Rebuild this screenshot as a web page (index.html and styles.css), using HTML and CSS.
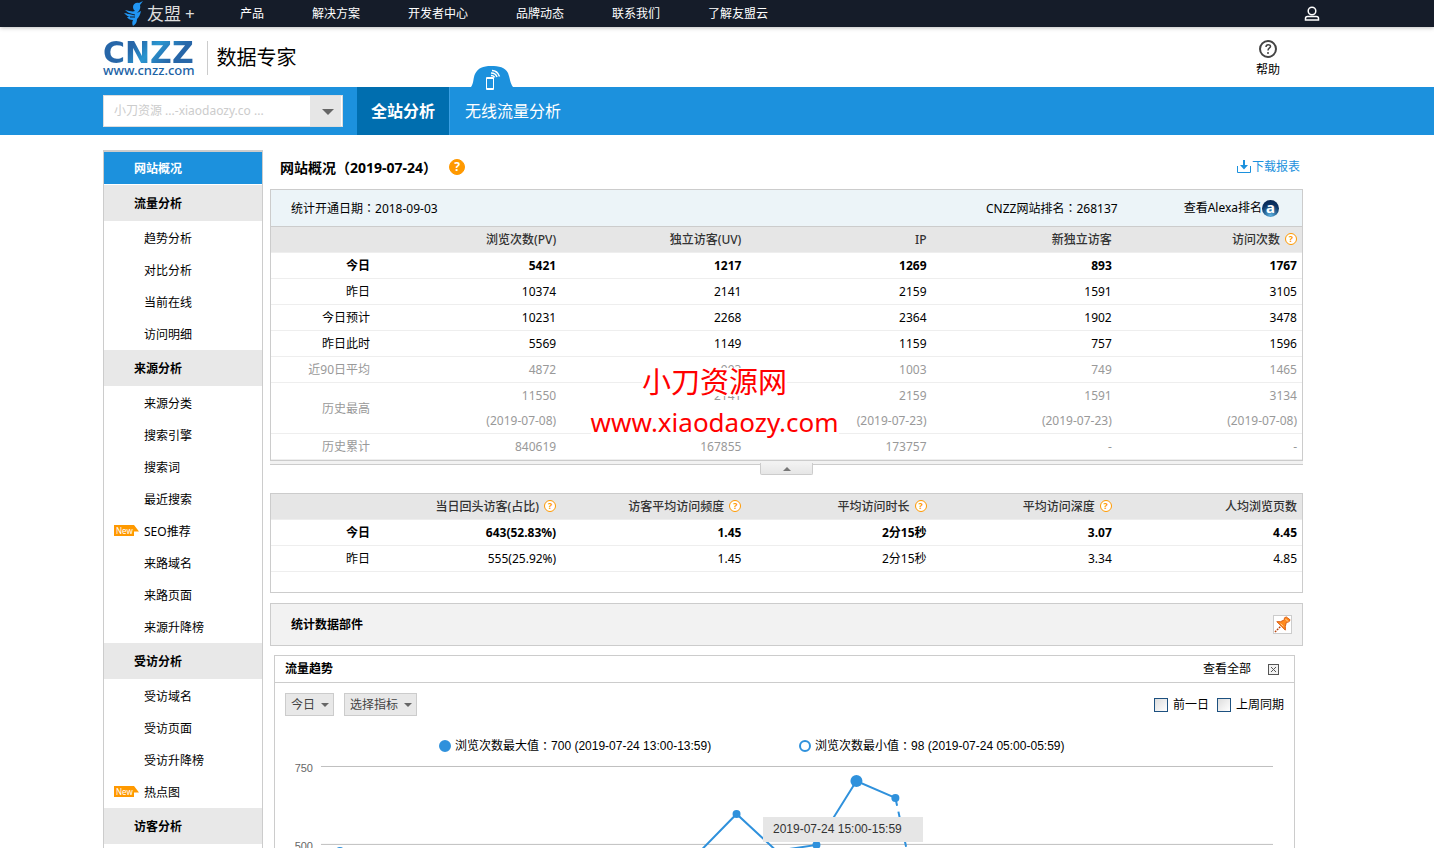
FILE: index.html
```html
<!DOCTYPE html>
<html lang="zh-CN">
<head>
    <meta charset="UTF-8">
    <meta name="viewport" content="width=device-width, initial-scale=1.0">
    <title>网站概况</title>
    <link rel="stylesheet" href="styles.css">
</head>
<body>
    <div class="topbar">
        <div class="wrap topbar-inner">
            <a class="umeng" href="#">
                <svg width="20" height="26" viewBox="0 0 20 26">
                    <path fill="#2196f3" d="M9 6c0-3 3-5 6-4l4-2-3 4c1 4-1 6-3 8l4-2c-1 4-2 6-4 8 0 3-1 5-4 7-1-2-1-4 0-6-3 0-5-1-6-3h4C4 16 2 14 0 12l7 1C5 12 3 11 1 9c4 1 8 2 10 1-1-1-2-2-2-4z"/>
                    <path fill="none" stroke="#151c29" d="M3 12l8 2M6 16h5"/>
                </svg>
                <span>友盟</span><span class="plus">+</span>
            </a>
            <nav class="topnav">
                <a href="#">产品</a>
                <a href="#">解决方案</a>
                <a href="#">开发者中心</a>
                <a href="#">品牌动态</a>
                <a href="#">联系我们</a>
                <a href="#">了解友盟云</a>
            </nav>
            <a class="user" href="#" aria-label="用户">
                <svg width="16" height="16" viewBox="0 0 16 16" fill="none" stroke="#fff" stroke-width="1.500">
                    <circle cx="8" cy="5" r="3.800"/>
                    <path d="M1.500 14v-1.500c0-1.500 1-2 2-2h9c1 0 2 .5 2 2V14z"/>
                </svg>
            </a>
        </div>
    </div>

    <header class="wrap header">
        <a class="cnzz" href="#">
            <span class="cnzz-name">CNZZ</span>
            <span class="cnzz-url">www.cnzz.com</span>
        </a>
        <span class="product">数据专家</span>
        <a class="help" href="#">
            <svg width="18" height="18" viewBox="0 0 18 18" fill="none" stroke="#444">
                <circle cx="9" cy="9" r="8" stroke-width="2"/>
                <path d="M7 7c0-3 4.500-3 4.500-.5C11.500 8 9 8 9 10.500M9 12v2" stroke-width="1.500"/>
            </svg>
            <span>帮助</span>
        </a>
    </header>

    <div class="bluebar">
        <div class="wrap bluebar-inner">
            <div class="dropdown site-select">
                <select aria-label="站点">
                    <option>小刀资源 ...-xiaodaozy.co ...</option>
                </select>
            </div>
            <a class="tab active" href="#">全站分析</a>
            <a class="tab" href="#">无线流量分析
                <svg class="bump" width="42" height="28" viewBox="0 0 42 28">
                    <path fill="#1c91dd" d="M0 21C3 17 2 12 4 8 7 2 12 0 20 0s14 1 17 7c2 5 2 10 5 14v7H0z"/>
                    <path fill="none" stroke="#fff" d="M15.500 11.500h7v12h-7zM15 22.500h8M15 12.500h8"/>
                    <path fill="none" stroke="#fff" stroke-width="1.500" d="M20 9.500c2 0 3 .5 3.500 2M20 7c3 0 5 1 6 4M21 4.500c4 0 6 2 7.500 6"/>
                </svg>
            </a>
        </div>
    </div>

    <div class="wrap content">
        <aside class="sidebar">
            <a class="current" href="#">网站概况</a>
            <h3>流量分析</h3>
            <ul>
                <li><a href="#">趋势分析</a></li>
                <li><a href="#">对比分析</a></li>
                <li><a href="#">当前在线</a></li>
                <li><a href="#">访问明细</a></li>
            </ul>
            <h3>来源分析</h3>
            <ul>
                <li><a href="#">来源分类</a></li>
                <li><a href="#">搜索引擎</a></li>
                <li><a href="#">搜索词</a></li>
                <li><a href="#">最近搜索</a></li>
                <li><span class="new">New</span><a href="#">SEO推荐</a></li>
                <li><a href="#">来路域名</a></li>
                <li><a href="#">来路页面</a></li>
                <li><a href="#">来源升降榜</a></li>
            </ul>
            <h3>受访分析</h3>
            <ul>
                <li><a href="#">受访域名</a></li>
                <li><a href="#">受访页面</a></li>
                <li><a href="#">受访升降榜</a></li>
                <li><span class="new">New</span><a href="#">热点图</a></li>
            </ul>
            <h3>访客分析</h3>
        </aside>

        <main>
            <div class="title-row">
                <h1>网站概况<span class="punct" lang="zh-TW">（</span>2019-07-24<span class="punct" lang="zh-TW">）</span></h1>
                <span class="tip tip-solid">?</span>
                <a class="download" href="#">
                    <svg width="15" height="14" viewBox="0 0 15 14">
                        <path fill="none" stroke="#1c91dd" d="M.5 6v6.500h13V6"/>
                        <path fill="#1c91dd" d="M6 0h2v5h3L7 9.500 3 5h3z"/>
                    </svg>下载报表
                </a>
            </div>

            <section class="panel overview">
                <div class="info">
                    <span>统计开通日期<span class="punct" lang="zh-TW">：</span>2018-09-03</span>
                    <span class="rank">CNZZ网站排名<span class="punct" lang="zh-TW">：</span>268137</span>
                    <a class="alexa" href="#">查看Alexa排名<span class="alexa-icon">a</span></a>
                </div>
                <table class="data">
                    <thead>
                        <tr><th></th><th>浏览次数(PV)</th><th>独立访客(UV)</th><th>IP</th><th>新独立访客</th><th>访问次数 <span class="tip">?</span></th></tr>
                    </thead>
                    <tbody>
                        <tr class="today"><td>今日</td><td>5421</td><td>1217</td><td>1269</td><td>893</td><td>1767</td></tr>
                        <tr><td>昨日</td><td>10374</td><td>2141</td><td>2159</td><td>1591</td><td>3105</td></tr>
                        <tr><td>今日预计</td><td>10231</td><td>2268</td><td>2364</td><td>1902</td><td>3478</td></tr>
                        <tr><td>昨日此时</td><td>5569</td><td>1149</td><td>1159</td><td>757</td><td>1596</td></tr>
                        <tr class="old"><td>近90日平均</td><td>4872</td><td>993</td><td>1003</td><td>749</td><td>1465</td></tr>
                        <tr class="old"><td>历史最高</td><td>11550<br>(2019-07-08)</td><td>2141<br>&nbsp;</td><td>2159<br>(2019-07-23)</td><td>1591<br>(2019-07-23)</td><td>3134<br>(2019-07-08)</td></tr>
                        <tr class="old"><td>历史累计</td><td>840619</td><td>167855</td><td>173757</td><td>-</td><td>-</td></tr>
                    </tbody>
                </table>
                <div class="watermark">
                    <span class="watermark-name">小刀资源网</span>
                    <span class="watermark-url">www.xiaodaozy.com</span>
                </div>
            </section>
            <div class="fold"><button type="button" aria-label="收起"></button></div>

            <section class="panel visitors">
                <table class="data">
                    <thead>
                        <tr><th></th><th>当日回头访客(占比) <span class="tip">?</span></th><th>访客平均访问频度 <span class="tip">?</span></th><th>平均访问时长 <span class="tip">?</span></th><th>平均访问深度 <span class="tip">?</span></th><th>人均浏览页数</th></tr>
                    </thead>
                    <tbody>
                        <tr class="today"><td>今日</td><td>643(52.83%)</td><td>1.45</td><td>2分15秒</td><td>3.07</td><td>4.45</td></tr>
                        <tr><td>昨日</td><td>555(25.92%)</td><td>1.45</td><td>2分15秒</td><td>3.34</td><td>4.85</td></tr>
                    </tbody>
                </table>
            </section>

            <section class="panel widgets">
                <h2>统计数据部件</h2>
                <button type="button" class="pin" aria-label="固定">
                    <svg width="17" height="17" viewBox="0 0 18 18">
                        <path stroke="#b8430c" stroke-width="1.500" stroke-dasharray="2 1" d="M1 17l6-6"/>
                        <path fill="#ff8a1e" stroke="#d9590c" d="M3 6h4l4-2V2l2-1 4 3-1 2-3 1-1 4v4L8 11z"/>
                        <path stroke="#ffd9a0" d="M12 3l3 3M7 8l3 3"/>
                    </svg>
                </button>
            </section>

            <section class="panel trend">
                <div class="trend-head">
                    <h2>流量趋势</h2>
                    <a href="#">查看全部</a>
                    <button type="button" class="close" aria-label="关闭">
                        <svg width="11" height="11" viewBox="0 0 11 11" fill="none" stroke="#555">
                            <rect x=".5" y=".5" width="10" height="10" fill="#f2f2f2"/>
                            <path d="M3 3l5 5M8 3L3 8"/>
                        </svg>
                    </button>
                </div>
                <div class="filters">
                    <div class="dropdown"><select aria-label="日期"><option>今日</option></select></div>
                    <div class="dropdown"><select aria-label="指标"><option>选择指标</option></select></div>
                    <div class="compare">
                        <label><input type="checkbox">前一日</label>
                        <label><input type="checkbox">上周同期</label>
                    </div>
                </div>
                <div class="legend">
                    <span><i class="dot dot-max"></i>浏览次数最大值<span class="punct" lang="zh-TW">：</span>700 (2019-07-24 13:00-13:59)</span>
                    <span><i class="dot"></i>浏览次数最小值<span class="punct" lang="zh-TW">：</span>98 (2019-07-24 05:00-05:59)</span>
                </div>
                <div class="chart">
                    <svg viewBox="0 0 1020 250">
                        <path stroke="#c0c0c0" d="M46 10.500h953M46 88.500h953M46 166.500h953M46 244.500h953"/>
                        <g font-family="Liberation Sans, sans-serif" font-size="11" fill="#666" text-anchor="end">
                            <text x="38" y="16">750</text>
                            <text x="38" y="94">500</text>
                            <text x="38" y="172">250</text>
                        </g>
                        <polyline fill="none" stroke="#2f91dc" stroke-width="2" points="65,96 105,131 144,161 184,191 224,211 264,215 303,195 343,165 383,140 422,99 462,58 502,95 542,89 582,25 621,42"/>
                        <path fill="none" stroke="#2f91dc" stroke-width="2" stroke-dasharray="8 6" d="M621 42l36 164"/>
                        <g fill="#2f91dc">
                            <circle cx="65" cy="95" r="4"/>
                            <circle cx="462" cy="58" r="4"/>
                            <circle cx="542" cy="89" r="4"/>
                            <circle cx="582" cy="25" r="6"/>
                            <circle cx="621" cy="42" r="4"/>
                        </g>
                    </svg>
                    <div class="tooltip">2019-07-24 15:00-15:59</div>
                </div>
            </section>
        </main>
    </div>
</body>
</html>
```
FILE: styles.css
```css
* {
    box-sizing: border-box;
}
body {
    margin: 0;
    height: 100vh;
    overflow: hidden;
    font-family: "Noto Sans", "Noto Sans CJK SC", sans-serif;
    font-size: 12px;
    line-height: 20px;
    color: #000;
    background: #fff;
}
a {
    color: inherit;
    text-decoration: none;
}
h1, h2, h3, ul {
    margin: 0;
    padding: 0;
}
h2, h3 {
    font-size: 12px;
}
button, select, input {
    margin: 0;
    font: inherit;
}
svg {
    display: block;
}
.wrap {
    margin: 0 131px 0 103px;
}
/* 全角标点居中显示 */
.punct {
    font-family: "Noto Sans CJK TC", sans-serif;
}

/* 顶部导航 */
.topbar {
    background: #151c29;
    color: #fff;
    box-shadow: 0 1px 4px rgba(0, 0, 0, 0.25);
}
.topbar-inner {
    display: flex;
    align-items: center;
    height: 27px;
    padding-left: 21px;
}
.umeng {
    display: flex;
    align-items: center;
    width: 116px;
    font-size: 17px;
    color: #ddd;
}
.umeng svg {
    margin-right: 3px;
}
.plus {
    margin-left: 4px;
}
.topnav {
    display: flex;
    gap: 48px;
}
.user {
    margin-left: auto;
    margin-right: -17px;
}

/* 页头 */
.header {
    display: flex;
    align-items: center;
    height: 60px;
    padding-top: 2px;
}
.cnzz {
    padding-right: 12px;
    border-right: 1px solid #ccc;
    color: #1b62a5;
}
.cnzz-name, .cnzz-url {
    display: block;
}
.cnzz-name {
    font: bold 30px/24px "DejaVu Sans", sans-serif;
    background: linear-gradient(135deg, #2766a8 30%, #2a96d0 50%, #2766a8 75%);
    -webkit-background-clip: text;
    background-clip: text;
    color: transparent;
}
.cnzz-url {
    font-size: 13px;
    font-weight: 500;
    line-height: 10px;
}
.product {
    padding-left: 9px;
    font-size: 20px;
}
.help {
    display: flex;
    flex-direction: column;
    align-items: center;
    gap: 2px;
    margin-left: auto;
    margin-right: 23px;
    padding-top: 3px;
}

/* 蓝色栏 */
.bluebar {
    background: #1c91dd;
}
.bluebar-inner {
    display: flex;
    align-items: center;
    height: 48px;
}
.tab {
    position: relative;
    padding: 0 15px;
    font-size: 16px;
    line-height: 48px;
    color: #fff;
}
.tab.active {
    padding: 0 14px;
    margin-left: 14px;
    background: #006eaf;
    border-right: 1px solid #3aa0e4;
    font-weight: bold;
}
.bump {
    position: absolute;
    top: -21px;
    left: 21px;
}

/* 下拉框 */
.dropdown {
    position: relative;
}
.dropdown select {
    appearance: none;
    display: block;
    height: 23px;
    padding: 0 17px 0 5px;
    border: 1px solid #ccc;
    border-radius: 0;
    background: #e8e8e8;
    color: #444;
}
.dropdown::after {
    content: "";
    position: absolute;
    top: 10px;
    right: 5px;
    border: 4px solid transparent;
    border-top-color: #666;
    pointer-events: none;
}
.site-select {
    width: 240px;
}
.site-select select {
    width: 100%;
    height: 32px;
    padding: 0 34px 0 10px;
    border-color: #ddd;
    background: linear-gradient(to left, #fff 1px, #e6e6e6 1px, #e6e6e6 32px, #fff 32px);
    color: #ccc;
}
.site-select::after {
    top: 14px;
    right: 9px;
    border-width: 6px;
}

/* 主体 */
.content {
    display: flex;
    gap: 7px;
    padding-top: 15px;
}
.sidebar {
    flex: none;
    width: 160px;
    border: 1px solid #ccc;
    border-top-width: 2px;
}
.current {
    display: block;
    padding: 2px 0 0 30px;
    border-bottom: 1px solid #fff;
    background: #1c91dd;
    background-clip: padding-box;
    color: #fff;
    font-weight: bold;
    line-height: 30px;
}
.sidebar h3 {
    padding: 2px 0 0 30px;
    margin-bottom: 1px;
    background: #e8e8e8;
    line-height: 34px;
}
.sidebar li {
    position: relative;
    padding: 2px 0 0 40px;
    line-height: 30px;
    list-style: none;
}
.new {
    position: absolute;
    top: 10px;
    left: 10px;
    width: 25px;
    height: 11px;
    padding-left: 2px;
    background: #f90;
    clip-path: polygon(0 0, 80% 0, 100% 60%, 80% 60%, 80% 100%, 0 100%);
    color: #fff;
    font-size: 8px;
    line-height: 11px;
}
main {
    flex: 1;
    min-width: 0;
}
.title-row {
    display: flex;
    align-items: center;
    height: 34px;
    margin-bottom: 5px;
    padding: 0 3px 0 10px;
}
h1 {
    font-size: 14px;
}
.tip {
    display: inline-block;
    width: 12px;
    height: 12px;
    margin-left: 2px;
    border: 1px solid #f90;
    border-radius: 50%;
    background: #fff;
    color: #f90;
    font-size: 9px;
    font-weight: bold;
    line-height: 10px;
    text-align: center;
    vertical-align: 2px;
}
.tip-solid {
    width: 16px;
    height: 16px;
    margin-left: 12px;
    background: #f90;
    color: #fff;
    font-size: 12px;
    line-height: 14px;
}
.download {
    display: flex;
    align-items: center;
    margin-left: auto;
    color: #1c91dd;
}
.panel {
    border: 1px solid #ccc;
}
.overview {
    position: relative;
}
.info {
    display: flex;
    align-items: center;
    height: 37px;
    padding: 0 23px 0 20px;
    border-bottom: 1px solid #ccc;
    background: #ecf4f8;
}
.rank {
    margin-left: auto;
}
.alexa {
    display: flex;
    align-items: center;
    margin-left: 66px;
}
.alexa-icon {
    width: 17px;
    height: 17px;
    border-radius: 50%;
    background: radial-gradient(circle at 50% 90%, #5ab0e0, #0c3566 60%, #06204a);
    color: #fff;
    font-size: 15px;
    font-weight: bold;
    line-height: 14px;
    text-align: center;
}
.data {
    width: 100%;
    table-layout: fixed;
    border-collapse: separate;
    border-spacing: 0;
}
.data th, .data td {
    padding: 0 5px 0 0;
    border-bottom: 1px solid #eee;
    line-height: 25px;
    text-align: right;
    white-space: nowrap;
}
.data th {
    background: #e6e6e6;
    color: #333;
    font-weight: 500;
}
.data th:first-child, .data td:first-child {
    width: 105px;
    padding-right: 6px;
}
.today {
    font-weight: bold;
}
.old {
    color: #999;
}
.watermark {
    position: absolute;
    top: 178px;
    left: 31%;
    display: flex;
    flex-direction: column;
    align-items: center;
    gap: 12px;
    color: #f00;
}
.watermark span {
    background: #fff;
    line-height: 28px;
}
.watermark-name {
    font-size: 29px;
}
.watermark-url {
    font-size: 26px;
}
.fold {
    height: 4px;
    margin-bottom: 28px;
    border-bottom: 1px solid #ccc;
    background: #f2f2f2;
}
.fold button {
    display: block;
    width: 53px;
    height: 12px;
    margin: 0 auto;
    padding: 0;
    border: 1px solid #ccc;
    border-top: 0;
    border-radius: 0 0 2px 2px;
    background: linear-gradient(#f2f2f2, #e6e6e6);
    transform: translateY(2px);
}
.fold button::before {
    content: "";
    display: block;
    width: 0;
    margin: 0 auto;
    border: 4px solid transparent;
    border-top: 0;
    border-bottom-color: #777;
}
.visitors {
    margin-bottom: 10px;
    padding-bottom: 20px;
}
.widgets {
    display: flex;
    align-items: center;
    justify-content: space-between;
    height: 43px;
    margin-bottom: 9px;
    padding: 0 10px 0 20px;
    background: #f2f2f2;
}
.pin, .close {
    padding: 0;
    background: #fff;
    border: 0;
}
.pin {
    border: 1px solid #ccc;
}
.trend {
    margin: 0 8px 0 4px;
}
.trend-head {
    display: flex;
    align-items: center;
    height: 27px;
    padding: 0 15px 0 10px;
    border-bottom: 1px solid #ccc;
}
.trend-head a {
    margin-left: auto;
    margin-right: 17px;
}
.filters {
    display: flex;
    align-items: center;
    gap: 10px;
    padding: 10px 10px 0;
}
.compare {
    display: flex;
    gap: 8px;
    margin-left: auto;
}
.compare label {
    display: flex;
    align-items: center;
    gap: 5px;
}
.compare input {
    appearance: none;
    width: 14px;
    height: 14px;
    border: 1px solid #1d5180;
    background: linear-gradient(135deg, #ddd, #fff);
}
.legend {
    display: flex;
    padding: 20px 0 0 164px;
    font-family: "Liberation Sans", "Noto Sans CJK SC", sans-serif;
}
.legend > span {
    display: flex;
    align-items: center;
    width: 360px;
    white-space: pre;
}
.dot {
    width: 12px;
    height: 12px;
    margin-right: 4px;
    border: 2px solid #2f91dc;
    border-radius: 50%;
}
.dot-max {
    background: #2f91dc;
}
.chart {
    position: relative;
}
.chart svg {
    width: 100%;
}
.tooltip {
    position: absolute;
    top: 61px;
    left: 488px;
    width: 160px;
    padding: 2px 10px;
    background: #e6e6e6;
    color: #333;
    font-family: "Liberation Sans", sans-serif;
    line-height: 21px;
}
```
